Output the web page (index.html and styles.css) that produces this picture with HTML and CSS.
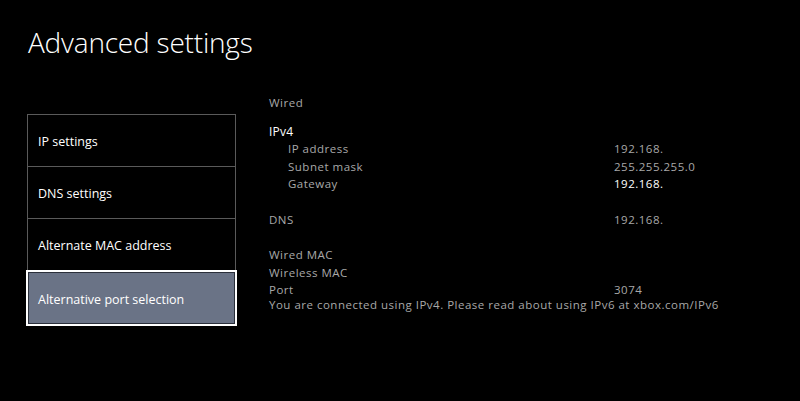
FILE: index.html
```html
<!DOCTYPE html>
<html lang="en">
<head>
    <meta charset="UTF-8">
    <meta name="viewport" content="width=device-width, initial-scale=1.0">
    <title>Advanced settings</title>
    <link rel="stylesheet" href="styles.css">
</head>
<body>
    <h1 class="title">Advanced settings</h1>

    <div class="main">
        <!-- left menu -->
        <div class="menu">
            <div class="menu-item">IP settings</div>
            <div class="menu-item">DNS settings</div>
            <div class="menu-item">Alternate MAC address</div>
            <div class="menu-item selected">Alternative port selection</div>
        </div>

        <!-- network details -->
        <div class="details">
            <div class="row"><span class="label">Wired</span></div>
            <div class="row heading"><span class="label">IPv4</span></div>
            <div class="row sub"><span class="label">IP address</span><span class="value">192.168.</span></div>
            <div class="row sub"><span class="label">Subnet mask</span><span class="value">255.255.255.0</span></div>
            <div class="row sub"><span class="label">Gateway</span><span class="value bright">192.168.</span></div>
            <div class="row gap"><span class="label">DNS</span><span class="value">192.168.</span></div>
            <div class="row gap"><span class="label">Wired MAC</span></div>
            <div class="row"><span class="label">Wireless MAC</span></div>
            <div class="row"><span class="label">Port</span><span class="value">3074</span></div>
            <div class="row note">You are connected using IPv4. Please read about using IPv6 at xbox.com/IPv6</div>
        </div>
    </div>
</body>
</html>
```

FILE: styles.css
```css
body {
    margin: 0;
    background-color: #000000;
    color: #ffffff;
    font-family: "Open Sans", "Noto Sans", sans-serif;
}
.title {
    margin: 0;
    padding: 22px 0 0 28px;
    font-size: 28px;
    font-weight: 300;
    line-height: 40px;
    letter-spacing: -0.2px;
}
.main {
    display: flex;
    padding-left: 27px;
    margin-top: 32px;
}

/* menu */
.menu {
    width: 207px;
    margin-top: 20px;
    border-left: 1px solid #5a5a5a;
    border-right: 1px solid #5a5a5a;
    border-top: 1px solid #5a5a5a;
}
.menu-item {
    height: 51px;
    line-height: 53px;
    padding-left: 10px;
    font-size: 12.5px;
    border-bottom: 1px solid #5a5a5a;
}
.menu-item.selected {
    margin: -1px -2px 0 -2px;
    height: 52px;
    line-height: 55px;
    padding-left: 10px;
    background-color: #6a7386;
    border: 2px solid #ffffff;
    box-shadow: inset 0 0 0 1px #2a2f3a;
}

/* details */
.details {
    margin-left: 33px;
    font-size: 11.5px;
    letter-spacing: 0.5px;
    color: #a8a8a8;
}
.row {
    display: flex;
    height: 17.5px;
    line-height: 17.5px;
}
.row .label {
    width: 345px;
}
.row.heading {
    margin-top: 11px;
    color: #ffffff;
    letter-spacing: 0.2px;
    font-size: 12px;
}
.row.sub .label {
    padding-left: 19px;
    width: 326px;
}
.row.gap {
    margin-top: 18px;
}
.row.note {
    height: 14px;
    line-height: 12px;
}
.value.bright {
    color: #ffffff;
}
```
